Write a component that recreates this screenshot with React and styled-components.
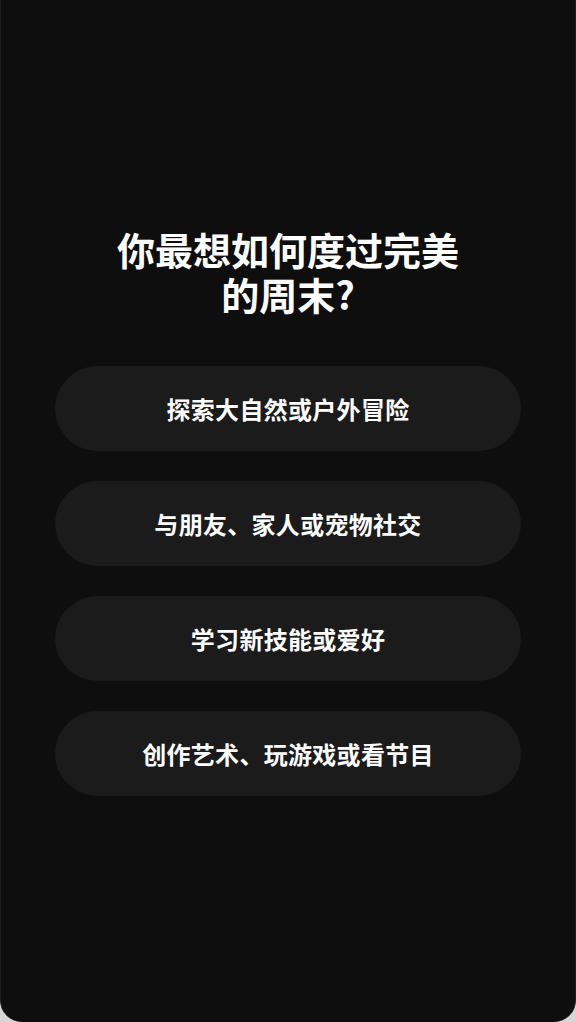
import React from 'react';
import styled, { createGlobalStyle } from 'styled-components';

const GlobalStyle = createGlobalStyle`
  html, body {
    margin: 0;
    padding: 0;
    background: #d6d6d6;
  }
  body {
    font-family: "Noto Sans CJK SC", "Noto Sans", Inter, sans-serif;
  }
`;

const Screen = styled.div`
  box-sizing: border-box;
  width: 576px;
  height: 1022px;
  background: #0e0e0e;
  border-left: 1px solid #1e1e1e;
  border-right: 1px solid #1e1e1e;
  border-radius: 0 0 22px 22px;
  display: flex;
  flex-direction: column;
  justify-content: center;
  padding: 0 54px;
`;

const Title = styled.h1`
  margin: 0 auto 50px;
  max-width: 360px;
  font-size: 38px;
  line-height: 45px;
  font-weight: 700;
  color: #ffffff;
  text-align: center;
`;

const Options = styled.div`
  display: flex;
  flex-direction: column;
  gap: 30px;
`;

const Option = styled.button`
  height: 85px;
  border: none;
  border-radius: 43px;
  background: #1b1b1b;
  color: #ffffff;
  font-family: inherit;
  font-size: 24px;
  letter-spacing: 0.3px;
  font-weight: 700;
  cursor: pointer;
  display: flex;
  align-items: center;
  justify-content: center;
`;

const options = [
  '探索大自然或户外冒险',
  '与朋友、家人或宠物社交',
  '学习新技能或爱好',
  '创作艺术、玩游戏或看节目',
];

const App = () => (
  <>
    <GlobalStyle />
    <Screen>
      <Title>你最想如何度过完美的周末?</Title>
      <Options>
        {options.map((text) => (
          <Option key={text}>{text}</Option>
        ))}
      </Options>
    </Screen>
  </>
);

export default App;
